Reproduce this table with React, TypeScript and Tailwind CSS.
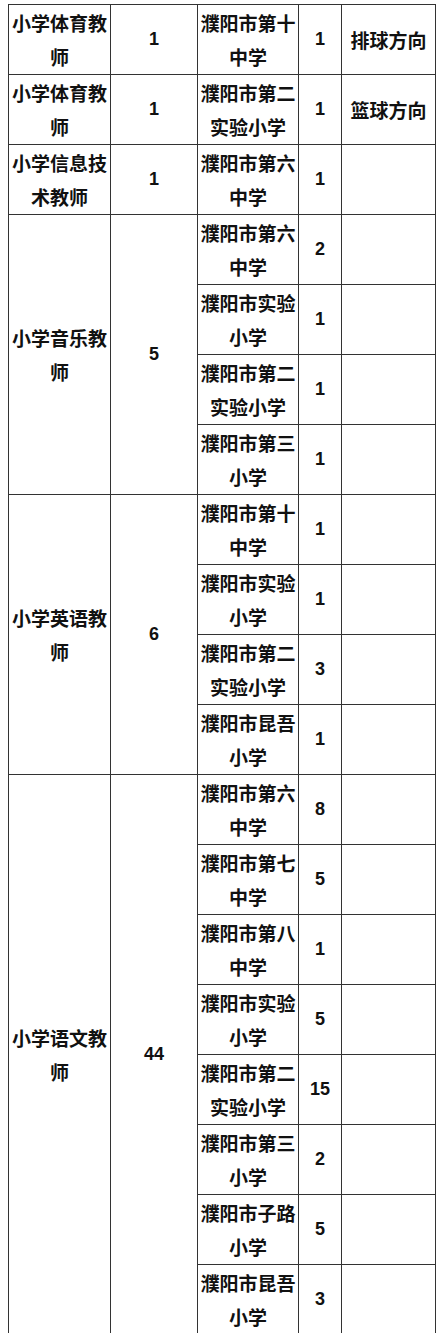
type Sub = { school: string; count: string; note?: string };
type Group = { title: string; total: string; subs: Sub[] };

const groups: Group[] = [
  { title: '小学体育教师', total: '1', subs: [{ school: '濮阳市第十中学', count: '1', note: '排球方向' }] },
  { title: '小学体育教师', total: '1', subs: [{ school: '濮阳市第二实验小学', count: '1', note: '篮球方向' }] },
  { title: '小学信息技术教师', total: '1', subs: [{ school: '濮阳市第六中学', count: '1' }] },
  {
    title: '小学音乐教师',
    total: '5',
    subs: [
      { school: '濮阳市第六中学', count: '2' },
      { school: '濮阳市实验小学', count: '1' },
      { school: '濮阳市第二实验小学', count: '1' },
      { school: '濮阳市第三小学', count: '1' },
    ],
  },
  {
    title: '小学英语教师',
    total: '6',
    subs: [
      { school: '濮阳市第十中学', count: '1' },
      { school: '濮阳市实验小学', count: '1' },
      { school: '濮阳市第二实验小学', count: '3' },
      { school: '濮阳市昆吾小学', count: '1' },
    ],
  },
  {
    title: '小学语文教师',
    total: '44',
    subs: [
      { school: '濮阳市第六中学', count: '8' },
      { school: '濮阳市第七中学', count: '5' },
      { school: '濮阳市第八中学', count: '1' },
      { school: '濮阳市实验小学', count: '5' },
      { school: '濮阳市第二实验小学', count: '15' },
      { school: '濮阳市第三小学', count: '2' },
      { school: '濮阳市子路小学', count: '5' },
      { school: '濮阳市昆吾小学', count: '3' },
    ],
  },
];

const cjk = "font-['Noto_Sans_CJK_SC','Noto_Sans',sans-serif] text-[19px] leading-[34px] font-bold";
const num = "font-['Liberation_Sans',Arial,sans-serif] text-[18px] font-bold";
const cell = 'border border-[#333] text-center align-middle text-[#111] px-[2px] py-0';

export default function App() {
  return (
    <div className="bg-white min-h-[1333px] pt-[4px] pl-[8px]">
      <table className="border-collapse table-fixed w-[427px]">
        <colgroup>
          <col className="w-[102px]" />
          <col className="w-[87px]" />
          <col className="w-[101px]" />
          <col className="w-[43px]" />
          <col className="w-[94px]" />
        </colgroup>
        <tbody>
          {groups.map((g, gi) =>
            g.subs.map((s, si) => (
              <tr key={`${gi}-${si}`} className="h-[70px]">
                {si === 0 && (
                  <>
                    <td rowSpan={g.subs.length} className={`${cell} ${cjk}`}>
                      {g.title}
                    </td>
                    <td rowSpan={g.subs.length} className={`${cell} ${num}`}>
                      {g.total}
                    </td>
                  </>
                )}
                <td className={`${cell} ${cjk}`}>{s.school}</td>
                <td className={`${cell} ${num}`}>{s.count}</td>
                <td className={`${cell} ${cjk}`}>{s.note ?? ''}</td>
              </tr>
            ))
          )}
        </tbody>
      </table>
    </div>
  );
}
